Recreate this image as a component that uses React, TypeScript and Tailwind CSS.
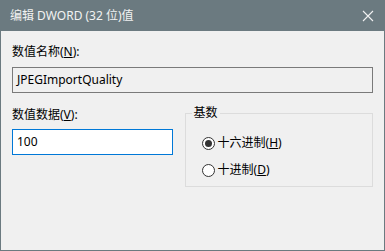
import React from 'react';

const font = { fontFamily: '"Noto Sans", "Noto Sans CJK SC", sans-serif' };

const Radio = ({ checked, children }: { checked?: boolean; children: React.ReactNode }) => (
  <div className="flex items-center h-[16px]">
    <span className="w-[13px] h-[13px] rounded-full border border-[#333333] bg-white flex items-center justify-center">
      {checked && <span className="w-[7px] h-[7px] rounded-full bg-[#333333]" />}
    </span>
    <span className="ml-[3px] leading-[16px]">{children}</span>
  </div>
);

const App = () => {
  return (
    <div
      className="w-[385px] h-[251px] border border-[#6b7a80] bg-[#f0f0f0] flex flex-col text-[12px] text-black"
      style={font}
    >
      {/* Title bar */}
      <div className="h-[30px] bg-[#6b7a80] flex items-center justify-between pl-[9px] pr-[9px] text-[#f2f2f2]">
        <span className="text-[12px] leading-[16px]">编辑 DWORD (32 位)值</span>
        <svg width="12" height="12" viewBox="0 0 12 12" className="mr-[1px]">
          <path d="M1 1 L11 11 M11 1 L1 11" stroke="#f2f2f2" strokeWidth="1.1" />
        </svg>
      </div>

      <div className="px-[11px] pt-[13px]">
        <div className="leading-[16px] h-[16px]">
          数值名称(<u>N</u>):
        </div>
        <div className="mt-[7px] h-[26px] border border-[#7a7a7a] bg-[#f0f0f0] flex items-center pl-[4px] leading-[16px]">
          JPEGImportQuality
        </div>

        <div className="mt-[14px] flex">
          <div className="w-[161px]">
            <div className="leading-[16px] h-[16px]">
              数值数据(<u>V</u>):
            </div>
            <div className="mt-[6px] h-[26px] border border-[#0078d7] bg-white flex items-center pl-[4px] leading-[16px]">
              100
            </div>
          </div>

          <div className="ml-[12px] mt-[6px] w-[189px] h-[74px] border border-[#dcdcdc] relative">
            <span className="absolute left-[6px] -top-[9px] px-[2px] bg-[#f0f0f0] leading-[16px]">基数</span>
            <div className="pl-[16px] pt-[21px] flex flex-col gap-[11px]">
              <Radio checked>
                十六进制(<u>H</u>)
              </Radio>
              <Radio>
                十进制(<u>D</u>)
              </Radio>
            </div>
          </div>
        </div>
      </div>
    </div>
  );
};

export default App;
